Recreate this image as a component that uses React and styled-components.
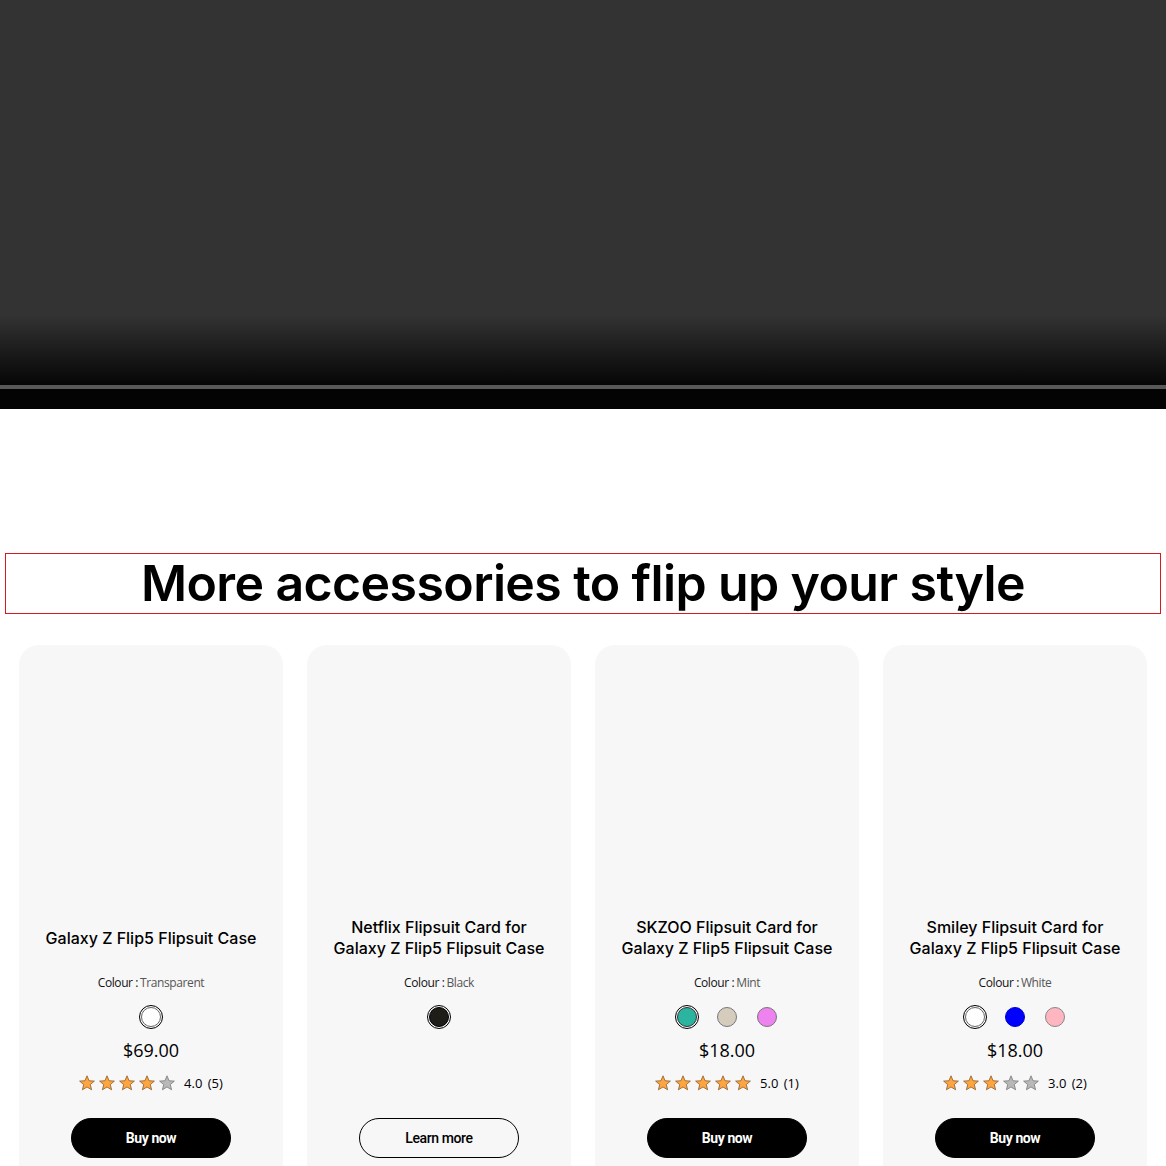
import React from "react";
import styled, { createGlobalStyle } from "styled-components";

const Global = createGlobalStyle`
  html, body { margin: 0; padding: 0; background: #fff; }
  body { font-family: "Open Sans", "Liberation Sans", sans-serif; color: #000; }
  * { box-sizing: border-box; }
`;

const Page = styled.div`
  width: 1166px;
  display: flex;
  flex-direction: column;
`;

const Hero = styled.div`
  height: 385px;
  background: linear-gradient(to bottom, #333 0px, #333 315px, #1c1c1c 350px, #060606 385px);
`;

const HeroRule = styled.div`
  height: 4px;
  background: #585858;
`;

const HeroBase = styled.div`
  height: 20px;
  background: #030303;
`;

const Section = styled.section`
  padding: 144px 5px 0;
  display: flex;
  flex-direction: column;
`;

const Heading = styled.h2`
  margin: 0;
  height: 61px;
  border: 1px solid #d71920;
  display: flex;
  align-items: center;
  justify-content: center;
  padding-bottom: 2px;
  font-family: "Inter", "Lato", sans-serif;
  font-weight: 600;
  font-size: 50px;
  letter-spacing: -0.6px;
  line-height: 1;
  color: #000;
`;

const Grid = styled.div`
  margin: 31px 14px 0;
  display: grid;
  grid-template-columns: repeat(4, 264px);
  gap: 24px;
`;

const Card = styled.div`
  background: #f7f7f7;
  border-radius: 20px;
  height: 540px;
  display: flex;
  flex-direction: column;
  align-items: center;
  padding: 272px 12px 0;
`;

const Title = styled.h3`
  margin: 0;
  height: 42px;
  display: flex;
  align-items: center;
  justify-content: center;
  text-align: center;
  font-family: "Inter", "Lato", sans-serif;
  font-weight: 500;
  font-size: 16px;
  line-height: 21px;
  letter-spacing: 0;
  color: #000;
`;

const ColourLabel = styled.div`
  margin-top: 15px;
  height: 18px;
  line-height: 18px;
  font-size: 12px;
  color: #111;
  letter-spacing: -0.4px;
`;

const ColourValue = styled.span`
  color: #555;
  margin-left: 2px;
`;

const Swatches = styled.div`
  margin-top: 13px;
  height: 24px;
  display: flex;
  gap: 16px;
`;

const SwatchRing = styled.div`
  width: 24px;
  height: 24px;
  border-radius: 50%;
  border: 1px solid ${(p) => (p.$selected ? "#000" : "transparent")};
  display: flex;
  align-items: center;
  justify-content: center;
`;

const Swatch = styled.div`
  width: 20px;
  height: 20px;
  border-radius: 50%;
  background: ${(p) => p.$color};
  border: 1px solid ${(p) => p.$border};
`;

const PriceBlock = styled.div`
  height: 55px;
  margin-top: 9px;
  display: flex;
  flex-direction: column;
  align-items: center;
`;

const Price = styled.div`
  height: 24px;
  line-height: 24px;
  font-size: 18px;
  color: #000;
`;

const Rating = styled.div`
  margin-top: 11px;
  height: 20px;
  display: flex;
  align-items: center;
  gap: 4px;
`;

const Stars = styled.div`
  display: flex;
  gap: 4px;
`;

const RatingText = styled.span`
  margin-left: 5px;
  font-size: 13px;
  color: #000;
  word-spacing: 2px;
`;

const Button = styled.button`
  margin-top: 25px;
  width: 160px;
  height: 40px;
  border-radius: 20px;
  font-family: "Roboto", "Open Sans", sans-serif;
  font-size: 14px;
  letter-spacing: -0.4px;
  cursor: pointer;
  background: ${(p) => (p.$outline ? "transparent" : "#000")};
  color: ${(p) => (p.$outline ? "#000" : "#fff")};
  border: 1px solid #000;
  font-weight: ${(p) => (p.$outline ? 500 : 700)};
`;

const Star = ({ on }) => (
  <svg width="16" height="16" viewBox="0 0 16 16">
    <polygon
      points="8,0.8 10.05,5.75 15.4,6.1 11.3,9.55 12.6,14.8 8,11.95 3.4,14.8 4.7,9.55 0.6,6.1 5.95,5.75"
      fill={on ? "#ffa540" : "#b8b8b8"}
      stroke={on ? "#8a5a2a" : "#7a7a7a"}
      strokeWidth="0.8"
      strokeLinejoin="round"
    />
  </svg>
);

const products = [
  {
    title: ["Galaxy Z Flip5 Flipsuit Case"],
    colour: "Transparent",
    swatches: [{ c: "#fff", b: "#666" }],
    price: "$69.00",
    rating: 4,
    reviews: "4.0 (5)",
    cta: "Buy now",
  },
  {
    title: ["Netflix Flipsuit Card for", "Galaxy Z Flip5 Flipsuit Case"],
    colour: "Black",
    swatches: [{ c: "#1f1d18", b: "#000" }],
    cta: "Learn more",
    outline: true,
  },
  {
    title: ["SKZOO Flipsuit Card for", "Galaxy Z Flip5 Flipsuit Case"],
    colour: "Mint",
    swatches: [
      { c: "#2bb4a0", b: "#333" },
      { c: "#d5ccbe", b: "#777" },
      { c: "#ee82ee", b: "#777" },
    ],
    price: "$18.00",
    rating: 5,
    reviews: "5.0 (1)",
    cta: "Buy now",
  },
  {
    title: ["Smiley Flipsuit Card for", "Galaxy Z Flip5 Flipsuit Case"],
    colour: "White",
    swatches: [
      { c: "#fff", b: "#666" },
      { c: "#0000ff", b: "#0000cc" },
      { c: "#ffb6c1", b: "#888" },
    ],
    price: "$18.00",
    rating: 3,
    reviews: "3.0 (2)",
    cta: "Buy now",
  },
];

export default function App() {
  return (
    <Page>
      <Global />
      <Hero />
      <HeroRule />
      <HeroBase />
      <Section>
        <Heading>More accessories to flip up your style</Heading>
        <Grid>
          {products.map((p, i) => (
            <Card key={i}>
              <Title>
                <span>
                  {p.title.map((t, j) => (
                    <React.Fragment key={j}>
                      {t}
                      {j < p.title.length - 1 && <br />}
                    </React.Fragment>
                  ))}
                </span>
              </Title>
              <ColourLabel>
                Colour :<ColourValue>{p.colour}</ColourValue>
              </ColourLabel>
              <Swatches>
                {p.swatches.map((s, j) => (
                  <SwatchRing key={j} $selected={j === 0}>
                    <Swatch $color={s.c} $border={s.b} />
                  </SwatchRing>
                ))}
              </Swatches>
              <PriceBlock>
                {p.price && (
                  <>
                    <Price>{p.price}</Price>
                    <Rating>
                      <Stars>
                        {[0, 1, 2, 3, 4].map((k) => (
                          <Star key={k} on={k < p.rating} />
                        ))}
                      </Stars>
                      <RatingText>{p.reviews}</RatingText>
                    </Rating>
                  </>
                )}
              </PriceBlock>
              <Button $outline={p.outline}>{p.cta}</Button>
            </Card>
          ))}
        </Grid>
      </Section>
    </Page>
  );
}
